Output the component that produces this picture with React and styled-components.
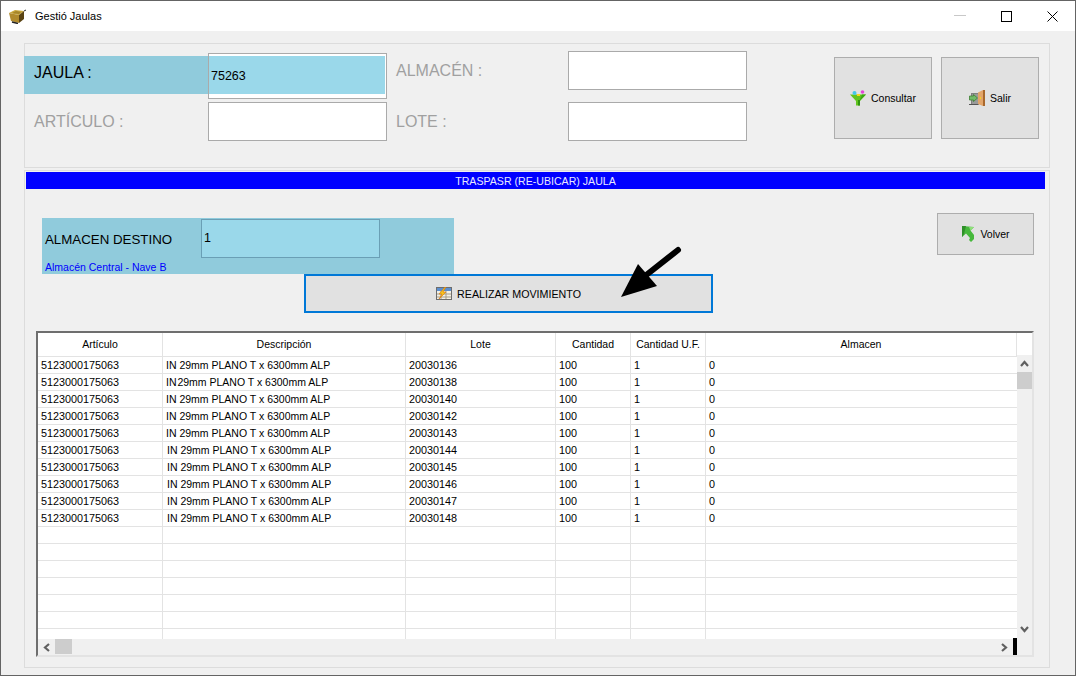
import React from "react";
import styled, { createGlobalStyle } from "styled-components";

const GlobalStyle = createGlobalStyle`
html,body{margin:0;padding:0;background:#f0f0f0;}
body{font-family:"Liberation Sans",Arial,sans-serif;font-size:10.5px;color:#000;}
*{box-sizing:border-box;}
`;

const Win = styled.div`
width:1076px;
height:676px;
display:flex;
flex-direction:column;
overflow:hidden;
background:#f0f0f0;
border:1px solid #646464;
`;
const TitleBar = styled.div`
height:30px;
flex:none;
background:#fff;
display:flex;
align-items:center;
padding-left:8px;
`;
const TitleText = styled.span`
margin-left:9px;
font-size:11px;
flex:1;
`;
const WinBtn = styled.div`
width:46px;
height:30px;
display:flex;
align-items:center;
justify-content:center;
`;
const Content = styled.div`
flex:1;
padding:12px 25px 0 23px;
display:flex;
flex-direction:column;
gap:2px;
`;
const Group = styled.div`
border:1px solid #dcdcdc;
width:1026px;
height:${({ $h }) => $h}px;
position:relative;
`;
const TopRow = styled.div`
display:flex;
margin-left:-1px;
padding-top:7px;
`;
const FieldGrid = styled.div`
display:grid;
grid-template-columns:184px 179px 181px 179px;
grid-template-rows:48px 39px;
row-gap:3px;
`;
const TopButtons = styled.div`
display:flex;
gap:9px;
margin:6px 0 0 87px;
`;
const KeyLabel = styled.div`
align-self:end;
height:38px;
margin-bottom:5px;
background:#90cbdc;
font-size:16px;
line-height:34px;
padding-left:10px;
`;
const FieldLabel = styled.div`
font-size:16px;
color:#a0a0a0;
height:39px;
line-height:39px;
padding-left:${({ $pad }) => $pad}px;
`;
const ActiveBox = styled.div`
align-self:end;
height:46px;
border:1px solid #aaa;
background:#fff;
padding:2px 1px 4px 0;
display:flex;
`;
const ActiveFill = styled.div`
flex:1;
background:#9ad8ea;
padding-left:2px;
font-size:12.5px;
line-height:41px;
`;
const TextBox = styled.div`
height:39px;
border:1px solid #aaa;
background:#fff;
`;
const Btn = styled.div`
background:#e1e1e1;
border:1px solid #adadad;
display:flex;
align-items:center;
justify-content:center;
gap:5px;
`;
const TallBtn = styled(Btn)`
width:98px;
height:82px;
`;
const BlueBar = styled.div`
margin:1px 0 0 1px;
width:1019px;
height:17px;
background:#00f;
color:#e8e8ff;
font-size:10.6px;
text-align:center;
line-height:18px;
`;
const MoveRow = styled.div`
display:flex;
justify-content:space-between;
padding:0 15px 0 17px;
`;
const DestPanel = styled.div`
margin-top:29px;
width:412px;
height:56px;
background:#90cbdc;
padding:1px 0 0 3px;
`;
const DestLine = styled.div`
display:flex;
align-items:center;
height:39px;
`;
const DestLabel = styled.div`
width:156px;
font-size:13.3px;
padding-top:2px;
`;
const DestInput = styled.div`
width:179px;
height:39px;
border:1px solid #6a9fb5;
background:#9ad8ea;
padding-left:2px;
font-size:12.5px;
line-height:37px;
`;
const DestName = styled.div`
color:#00f;
line-height:14px;
margin-top:2px;
`;
const VolverBtn = styled(Btn)`
margin-top:24px;
width:97px;
height:42px;
`;
const RunBtn = styled(Btn)`
margin-left:279px;
width:409px;
height:39px;
border:2px solid #0078d7;
font-size:10.7px;
`;
const ArrowMark = styled.svg`
position:absolute;
left:590px;
top:74px;
`;
const Table = styled.div`
margin:18px 0 0 11px;
width:998px;
height:326px;
display:flex;
background:#fff;
border-style:solid;
border-width:2px;
border-color:#6e6e6e #e3e3e3 #e3e3e3 #6e6e6e;
`;
const TableMain = styled.div`
width:979px;
display:flex;
flex-direction:column;
`;
const Rows = styled.div`
flex:1;
overflow:hidden;
`;
const RowLine = styled.div`
display:grid;
grid-template-columns:125px 243px 150px 75px 75px 311px;
height:${({ $head }) => ($head ? 24 : 17)}px;
`;
const Cell = styled.div`
border-bottom:1px solid #e3e3e3;
border-right:${({ $last }) => ($last ? "none" : "1px solid #e3e3e3")};
padding-left:${({ $indent }) => $indent || 3}px;
font-size:${({ $num }) => ($num ? 10.8 : 10.5)}px;
line-height:16px;
white-space:pre;
overflow:hidden;
`;
const HeadCell = styled.div`
border-bottom:1px solid #e3e3e3;
border-right:1px solid #e3e3e3;
text-align:center;
line-height:23px;
`;
const HScroll = styled.div`
height:16px;
flex:none;
background:#f0f0f0;
display:flex;
`;
const ArrowBtn = styled.div`
width:17px;
height:16px;
flex:none;
display:flex;
align-items:center;
justify-content:center;
`;
const Thumb = styled.div`
background:#cdcdcd;
flex:none;
width:${({ $w }) => $w}px;
height:${({ $h }) => $h}px;
`;
const Spacer = styled.div`
flex:1;
`;
const BlackTick = styled.div`
width:4px;
height:17px;
margin-top:-1px;
background:#000;
flex:none;
`;
const TableSide = styled.div`
width:15px;
display:flex;
flex-direction:column;
`;
const SideHead = styled.div`
height:22px;
flex:none;
background:#fff;
`;
const VScroll = styled.div`
flex:1;
background:#f0f0f0;
display:flex;
flex-direction:column;
`;
const VArrow = styled(ArrowBtn)`
width:15px;
height:17px;
`;
const VCorner = styled.div`
height:17px;
flex:none;
`;

const Chevron = ({ dir }) => {
	const rot = { up: 0, right: 90, down: 180, left: 270 }[dir];
	return (
		<svg width="9" height="9" viewBox="0 0 9 9" style={{ transform: `rotate(${rot}deg)` }}>
			<path d="M1 7 L4.5 3 L8 7" fill="none" stroke="#606060" strokeWidth="2.2" />
		</svg>
	);
};

const BoxIcon = () => (
	<svg width="17" height="15" viewBox="0 0 17 15">
		<path d="M0 4 L6 1 L15 2 L10 6 Z" fill="#c9a83c" />
		<path d="M3 4 L7 2 L12 3 L10 5 Z" fill="#a5852a" />
		<path d="M0 4 L10 6 L10 14 L2 12 Z" fill="#b08a2c" />
		<path d="M10 6 L15 2 L15 10 L10 14 Z" fill="#5a4312" />
		<path d="M15 2 L17 1" stroke="#222" strokeWidth="1" />
		<path d="M3 13 L9 14.500" stroke="#222" strokeWidth="1.5" />
	</svg>
);

const FunnelIcon = () => (
	<svg width="16" height="16" viewBox="0 0 16 16">
		<path d="M0 4.500 L16 4.500 L10 11 L10 15.500 L6 15.500 L6 11 Z" fill="#62c41e" />
		<path d="M8 10 L10 10 L10 15.500 L8 15.500 Z" fill="#2f9410" />
		<path d="M9.500 11 L16 4.500 L12 4.500 Z" fill="#3ba814" />
		<circle cx="4.500" cy="3" r="2" fill="#45c6e8" />
		<circle cx="12.500" cy="2" r="1.800" fill="#e445d8" />
		<rect x="7" y="4" width="3" height="2" fill="#f4d620" />
	</svg>
);

const DoorIcon = () => (
	<svg width="16" height="16" viewBox="0 0 16 16">
		<rect x="2" y="3" width="8" height="12" fill="#808080" />
		<rect x="3" y="4" width="6" height="10" fill="#9a9a9a" />
		<rect x="0" y="14" width="9" height="1" fill="#555" />
		<path d="M9 2.500 L14 0 L14 16 L9 14 Z" fill="#e2a56a" />
		<path d="M14 0 L16 0 L16 16 L14 16 Z" fill="#a9682c" />
		<rect x="11" y="7" width="1" height="2" fill="#f5d21e" />
		<path d="M0.500 6 L4.500 6 L4.500 4.500 L8.500 8 L4.500 11.500 L4.500 10 L0.500 10 Z" fill="#72bb68" stroke="#3f8035" strokeWidth="0.8" />
	</svg>
);

const BackIcon = () => (
	<svg width="14" height="16" viewBox="0 0 14 16">
		<path d="M1 0 L13 1 L9.500 4.500 L13 9 L13 13 L10 16 L8 14 L9 12 L5 7.500 L1 11 Z" fill="#46b83c" />
		<path d="M1 0 L5 0 L3 8 L1 11 Z" fill="#2f8f2a" />
		<path d="M9.500 4.500 L13 1 L8 1 Z" fill="#8fe07a" />
	</svg>
);

const GridBoltIcon = () => (
	<svg width="16" height="13" viewBox="0 0 16 13">
		<rect x="0.500" y="0.500" width="15" height="12" fill="#f3f0e6" stroke="#6d6d6d" />
		<rect x="1" y="1" width="14" height="3" fill="#5b8fd0" />
		<path d="M1 7 H15 M1 10 H15 M5 4 V12 M10 4 V12" stroke="#a59c88" strokeWidth="1" />
		<path d="M9 0 L3 7 L6 7 L3 12 L10 5 L7 5 L10 0 Z" fill="#f6c51c" stroke="#d9730e" strokeWidth="0.6" />
	</svg>
);

const columns = ["Artículo", "Descripción", "Lote", "Cantidad", "Cantidad U.F.", "Almacen"];
const plainDesc = "IN 29mm PLANO T x 6300mm ALP";
const lots = [
	{ lote: "20030136" },
	{ lote: "20030138", desc: "IN\u200A29mm PLANO T x 6300mm ALP" },
	{ lote: "20030140" },
	{ lote: "20030142" },
	{ lote: "20030143" },
	{ lote: "20030144", indent: 4 },
	{ lote: "20030145", indent: 4 },
	{ lote: "20030146", indent: 4 },
	{ lote: "20030147", indent: 4 },
	{ lote: "20030148", indent: 4 },
];
const emptyRows = [...new Array(7)].map((it, i) => i);

export default function App() {
	return (
		<>
			<GlobalStyle />
			<Win>
				<TitleBar>
					<BoxIcon />
					<TitleText>Gestió Jaulas</TitleText>
					<WinBtn>
						<svg width="12" height="2"><rect width="12" height="1" fill="#c8c8c8" /></svg>
					</WinBtn>
					<WinBtn>
						<svg width="11" height="11"><rect x="0.5" y="0.5" width="10" height="10" fill="none" stroke="#000" /></svg>
					</WinBtn>
					<WinBtn>
						<svg width="11" height="11"><path d="M0.5 0.5 L10.500 10.500 M10.500 0.5 L0.5 10.500" stroke="#000" /></svg>
					</WinBtn>
				</TitleBar>
				<Content>
					<Group $h={125}>
						<TopRow>
							<FieldGrid>
								<KeyLabel>JAULA :</KeyLabel>
								<ActiveBox><ActiveFill>75263</ActiveFill></ActiveBox>
								<FieldLabel $pad={9}>ALMACÉN :</FieldLabel>
								<TextBox />
								<FieldLabel $pad={10}>ARTÍCULO :</FieldLabel>
								<TextBox />
								<FieldLabel $pad={9}>LOTE :</FieldLabel>
								<TextBox />
							</FieldGrid>
							<TopButtons>
								<TallBtn><FunnelIcon />Consultar</TallBtn>
								<TallBtn><DoorIcon />Salir</TallBtn>
							</TopButtons>
						</TopRow>
					</Group>
					<Group $h={498}>
						<BlueBar>TRASPASR (RE-UBICAR) JAULA</BlueBar>
						<MoveRow>
							<DestPanel>
								<DestLine>
									<DestLabel>ALMACEN DESTINO</DestLabel>
									<DestInput>1</DestInput>
								</DestLine>
								<DestName>Almacén Central - Nave B</DestName>
							</DestPanel>
							<VolverBtn><BackIcon />Volver</VolverBtn>
						</MoveRow>
						<RunBtn><GridBoltIcon />REALIZAR MOVIMIENTO</RunBtn>
						<ArrowMark width="70" height="57" viewBox="0 0 70 57">
							<path d="M6 52 L23 19 L42 41 Z" fill="#000" />
							<path d="M63 5 L30 31" stroke="#000" strokeWidth="6" strokeLinecap="round" />
						</ArrowMark>
						<Table>
							<TableMain>
								<RowLine $head>
									{columns.map((c) => <HeadCell key={c}>{c}</HeadCell>)}
								</RowLine>
								<Rows>
									{lots.map((it) => (
										<RowLine key={it.lote}>
											<Cell $num>5123000175063</Cell>
											<Cell $indent={it.indent}>{it.desc || plainDesc}</Cell>
											<Cell $num>{it.lote}</Cell>
											<Cell $num>100</Cell>
											<Cell $num>1</Cell>
											<Cell $num $last>0</Cell>
										</RowLine>
									))}
									{emptyRows.map((i) => (
										<RowLine key={i}>
											<Cell /><Cell /><Cell /><Cell /><Cell /><Cell $last />
										</RowLine>
									))}
								</Rows>
								<HScroll>
									<ArrowBtn><Chevron dir="left" /></ArrowBtn>
									<Thumb $w={17} $h={15} />
									<Spacer />
									<ArrowBtn><Chevron dir="right" /></ArrowBtn>
									<BlackTick />
								</HScroll>
							</TableMain>
							<TableSide>
								<SideHead />
								<VScroll>
									<VArrow><Chevron dir="up" /></VArrow>
									<Thumb $w={15} $h={17} />
									<Spacer />
									<VArrow><Chevron dir="down" /></VArrow>
									<VCorner />
								</VScroll>
							</TableSide>
						</Table>
					</Group>
				</Content>
			</Win>
		</>
	);
}
